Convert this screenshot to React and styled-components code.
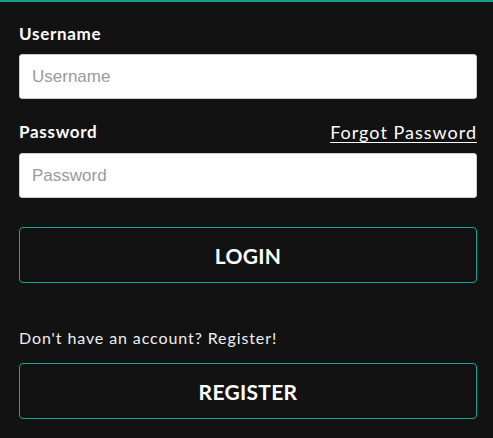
import React from "react";
import styled, { createGlobalStyle } from "styled-components";

const GlobalStyle = createGlobalStyle`
  html, body {
    margin: 0;
    padding: 0;
    background: #121212;
  }
`;

const Card = styled.div`
  box-sizing: border-box;
  width: 493px;
  height: 438px;
  background: #121212;
  border-top: 2px solid #11a090;
  padding: 22px 16px 0 19px;
  display: flex;
  flex-direction: column;
  font-family: "Lato", "Noto Sans", sans-serif;
  color: #fff;
`;

const LabelRow = styled.div`
  display: flex;
  justify-content: space-between;
  align-items: flex-end;
  height: 20px;
  margin-top: ${(p) => p.$top || 0}px;
  margin-bottom: ${(p) => p.$bottom || 10}px;
`;

const Label = styled.label`
  font-size: 17px;
  font-weight: 700;
  line-height: 20px;
  letter-spacing: 0.7px;
`;

const ForgotLink = styled.a`
  color: #fff;
  font-size: 18px;
  line-height: 20px;
  letter-spacing: 1px;
  text-decoration: underline;
  text-underline-offset: 3px;
  cursor: pointer;
`;

const Input = styled.input`
  box-sizing: border-box;
  width: 100%;
  height: 45px;
  border: 1px solid #ccc;
  border-radius: 3px;
  background: #fff;
  padding: 0 12px;
  font-family: "Liberation Sans", Arial, sans-serif;
  font-size: 17px;
  color: #333;
  outline: none;
  &::placeholder {
    color: #9a9a9a;
  }
`;

const Button = styled.button`
  box-sizing: border-box;
  width: 100%;
  height: 56px;
  margin-top: ${(p) => p.$top || 0}px;
  background: transparent;
  border: 1px solid #16a596;
  border-radius: 4px;
  color: #fff;
  font-family: "Lato", "Noto Sans", sans-serif;
  font-size: 21px;
  font-weight: 700;
  letter-spacing: 0.3px;
  cursor: pointer;
`;

const Note = styled.p`
  margin: 45px 0 0;
  font-size: 16px;
  line-height: 20px;
  letter-spacing: 0.9px;
  color: #f0f0f0;
`;

export default function App() {
  return (
    <>
      <GlobalStyle />
      <Card>
        <LabelRow $bottom={10}>
          <Label>Username</Label>
        </LabelRow>
        <Input placeholder="Username" />
        <LabelRow $top={23} $bottom={11}>
          <Label>Password</Label>
          <ForgotLink>Forgot Password</ForgotLink>
        </LabelRow>
        <Input type="password" placeholder="Password" />
        <Button $top={29}>LOGIN</Button>
        <Note>Don't have an account? Register!</Note>
        <Button $top={15}>REGISTER</Button>
      </Card>
    </>
  );
}
